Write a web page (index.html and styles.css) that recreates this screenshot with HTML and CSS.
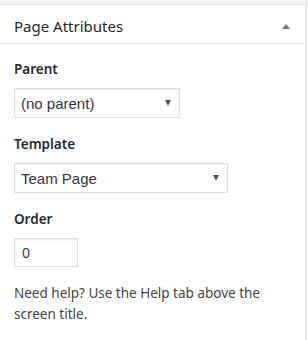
FILE: index.html
```html
<!DOCTYPE html>
<html lang="en">
<head>
  <meta charset="UTF-8" />
  <title>Page Attributes</title>
  <link rel="stylesheet" href="styles.css">
</head>
<body>
  <div class="postbox">
    <div class="postbox-header">
      <h2>Page Attributes</h2>
      <span class="toggle"></span>
    </div>
    <div class="inside">
      <p class="label">Parent</p>
      <div class="select parent">
        <span>(no parent)</span>
        <span class="caret"></span>
      </div>

      <p class="label">Template</p>
      <div class="select template">
        <span>Team Page</span>
        <span class="caret"></span>
      </div>

      <p class="label">Order</p>
      <div class="order">0</div>

      <p class="help">Need help? Use the Help tab above the screen title.</p>
    </div>
  </div>
</body>
</html>
```

FILE: styles.css
```css
* {
  margin: 0;
  padding: 0;
  box-sizing: border-box;
}

body {
  background: #f1f1f1;
  font-family: 'Noto Sans', 'Open Sans', sans-serif;
  color: #23282d;
  width: 308px;
  height: 340px;
  overflow: hidden;
  padding-top: 4px;
}

.postbox {
  background: #fff;
  border: 1px solid #e5e5e5;
  border-left: none;
  width: 306px;
  height: 340px;
}

.postbox-header {
  display: flex;
  align-items: center;
  justify-content: space-between;
  height: 39px;
  border-bottom: 1px solid #eee;
  padding: 4px 14px 0 14px;
}

.postbox-header h2 {
  font-size: 15px;
  font-weight: 400;
  color: #23282d;
}

.toggle {
  width: 0;
  height: 0;
  border-left: 4px solid transparent;
  border-right: 4px solid transparent;
  border-bottom: 5px solid #72777c;
  margin-right: 1px;
}

.inside {
  padding: 14px 14px 0 14px;
}

.label {
  font-size: 13.5px;
  font-weight: 600;
  line-height: 20px;
  margin-top: 1px;
}

.select {
  display: flex;
  align-items: center;
  justify-content: space-between;
  height: 30px;
  border: 1px solid #ddd;
  box-shadow: inset 0 1px 2px rgba(0,0,0,0.07);
  padding: 0 8px 0 6px;
  font-family: 'Liberation Sans', Arial, sans-serif;
  font-size: 15px;
  color: #32373c;
  margin: 9px 0 16px;
}

.parent {
  width: 166px;
}

.template {
  width: 214px;
}

.caret {
  width: 0;
  height: 0;
  border-left: 3px solid transparent;
  border-right: 3px solid transparent;
  border-top: 6px solid #555;
}

.order {
  width: 64px;
  height: 29px;
  border: 1px solid #ddd;
  box-shadow: inset 0 1px 2px rgba(0,0,0,0.07);
  padding: 0 8px 0 7px;
  font-size: 14px;
  line-height: 27px;
  color: #32373c;
  margin: 9px 0 16px;
}

.help {
  font-size: 13.5px;
  line-height: 21px;
  color: #444;
  width: 280px;
}
```
